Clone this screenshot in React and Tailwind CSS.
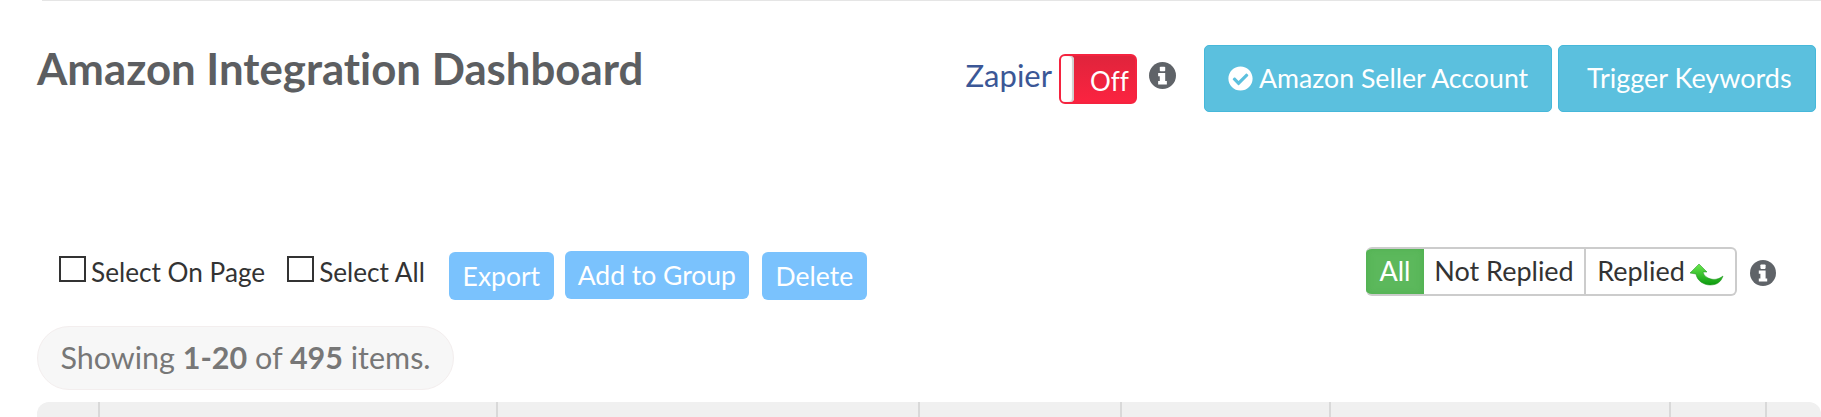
import React from 'react';
import { FaCheckCircle } from 'react-icons/fa';

const ReplyArrow = () => (
  <svg width="34" height="22" viewBox="0 0 34 22" className="ml-[5px] mt-[6px]">
    <defs>
      <linearGradient id="arrowGreen" x1="0" y1="0" x2="0" y2="1">
        <stop offset="0" stopColor="#6be84f" />
        <stop offset="1" stopColor="#0b9a0e" />
      </linearGradient>
    </defs>
    <path
      d="M9 0 L0 9 L6 10 C7 17 14 21 20 21 C27 21 31 18 33 12 C29 15 25 16 21 15 C17 14 14 12 13 8 L17 8 Z"
      fill="url(#arrowGreen)"
      stroke="#178f17"
      strokeWidth="0.5"
    />
  </svg>
);

// heavier "i" than the fa5 glyph, closer to the old font awesome one
const InfoIcon = ({ className }) => (
  <svg viewBox="0 0 26 26" className={className}>
    <circle cx="13" cy="13" r="13" fill="#5f6368" />
    <rect x="10.4" y="4.5" width="5.2" height="4.4" rx="0.8" fill="#fff" />
    <path d="M8.8 10.6 H15.6 V18.4 H17.2 V21.6 H8.8 V18.4 H10.4 V13.8 H8.8 Z" fill="#fff" />
  </svg>
);

const columns = ['w-[63px]', 'w-[398px]', 'w-[422px]', 'w-[202px]', 'w-[209px]', 'w-[340px]', 'w-[96px]', 'flex-1'];

const App = () => {
  return (
    <div className="h-[417px] w-[1821px] overflow-hidden bg-white font-['Lato','Open_Sans',sans-serif] text-[#333] [font-variant-ligatures:none]">
      <div className="ml-[42px] h-px bg-[#e5e5e5]" />

      <div className="mt-[44px] flex h-[67px] items-start pl-[37px] pr-[5px]">
        <h1 className="text-[43.75px] font-bold leading-[46px] text-[#5c5e61]">Amazon Integration Dashboard</h1>
        <div className="ml-auto flex items-start">
          <span className="mt-[13px] text-[31px] leading-[34px] text-[#3b5796]">Zapier</span>
          <div className="ml-[7px] mt-[9px] flex h-[50px] w-[78px] items-center rounded-[6px] border-2 border-[#f5233f] bg-gradient-to-b from-[#e0243c] to-[#fb2340]">
            <div className="h-full w-[13px] rounded-[4px] bg-white shadow-[inset_-2px_0_1px_#cfcfcf]" />
            <span className="ml-[16px] mt-[3px] text-[26px] leading-none text-white">Off</span>
          </div>
          <InfoIcon className="ml-[12px] mt-[17px] h-[27px] w-[27px]" />
          <button className="ml-[28px] flex h-[67px] w-[348px] items-center rounded-[5px] border border-[#46b8da] bg-[#5bc0de] pl-[23px] text-[26.7px] text-white">
            <FaCheckCircle className="mr-[6px]" size={25} />
            Amazon Seller Account
          </button>
          <button className="ml-[6px] h-[67px] w-[258px] rounded-[5px] border border-[#46b8da] bg-[#5bc0de] pl-[28px] text-left text-[27px] text-white">
            Trigger Keywords
          </button>
        </div>
      </div>

      <div className="mt-[135px] flex h-[53px] items-start pl-[59px] pr-[45px]">
        <div className="mt-[9px] flex items-start text-[26.2px] leading-[32px] text-[#333]">
          <span className="h-[26px] w-[27px] border-2 border-[#333]" />
          <span className="ml-[5px]">Select On Page</span>
          <span className="ml-[22px] h-[26px] w-[27px] border-2 border-[#333]" />
          <span className="ml-[5px]">Select All</span>
        </div>
        <div className="ml-[24px] mt-[5px] flex items-start text-[26.5px] text-white">
          <button className="h-[48px] w-[105px] rounded-[6px] bg-[#7ac2fd] pt-[2px]">Export</button>
          <button className="ml-[11px] mt-[-1px] h-[48px] w-[184px] rounded-[6px] bg-[#7ac2fd] pt-[2px]">Add to Group</button>
          <button className="ml-[13px] h-[48px] w-[105px] rounded-[6px] bg-[#7ac2fd] pt-[2px]">Delete</button>
        </div>
        <div className="ml-auto flex items-start">
          <div className="flex h-[49px] w-[371px] overflow-hidden rounded-[6px] border-2 border-l-0 border-[#ccc] text-[27px] text-[#333]">
            <div className="mt-[-2px] mb-[-2px] flex w-[58px] items-center justify-center bg-[#5cb85c] text-white shadow-[inset_0_0_8px_#4cae4c]">All</div>
            <div className="flex w-[162px] items-center justify-center border-r-2 border-[#ccc]">Not Replied</div>
            <div className="flex flex-1 items-center justify-center">
              Replied
              <ReplyArrow />
            </div>
          </div>
          <InfoIcon className="ml-[13px] mt-[13px] h-[26px] w-[26px]" />
        </div>
      </div>

      <div className="ml-[37px] mt-[26px] flex h-[64px] w-[417px] items-center justify-center rounded-[32px] border border-[#f3eeee] bg-[#f7f7f7] text-[30.5px] text-[#777]">
        <span>
          Showing <b>1-20</b> of <b>495</b> items.
        </span>
      </div>

      <div className="ml-[37px] mt-[12px] flex h-[40px] rounded-t-[12px] bg-[#f0f0f0]">
        {columns.map((w, i) => (
          <div key={i} className={`${w} border-r-2 border-[#d9d9d9] last:border-r-0`} />
        ))}
      </div>
    </div>
  );
};

export default App;
